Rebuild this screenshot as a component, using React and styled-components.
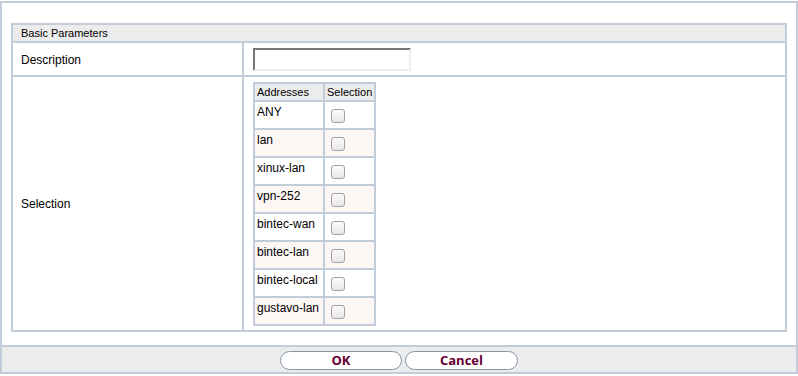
import React from 'react';
import styled, {createGlobalStyle} from 'styled-components';

const GlobalStyle=createGlobalStyle`
  html, body {
    margin: 0;
    padding: 0;
    background: #fff;
  }
  body {
    font-family: "Liberation Sans", Arial, sans-serif;
    font-size: 12px;
    color: #000;
  }
`;

const line="#c3cdd9";

const addresses=["ANY", "lan", "xinux-lan", "vpn-252", "bintec-wan", "bintec-lan", "bintec-local", "gustavo-lan"];

export default function App(){
  return(
    <>
      <GlobalStyle/>
      <Page>
        <Frame>
          <Body>
            <ParamTable>
              <SectionHead>Basic Parameters</SectionHead>
              <LabelCell $shift={2}>Description</LabelCell>
              <ValueCell>
                <TextInput type="text"/>
              </ValueCell>
              <LabelCell $shift={0}>Selection</LabelCell>
              <ValueCell $top>
                <AddrTable>
                  <AddrHead>Addresses</AddrHead>
                  <AddrHead>Selection</AddrHead>
                  {addresses.map((a, i)=>(
                    <React.Fragment key={a}>
                      <AddrCell $odd={i%2===1}>{a}</AddrCell>
                      <AddrCell $odd={i%2===1} $check>
                        <Check/>
                      </AddrCell>
                    </React.Fragment>
                  ))}
                </AddrTable>
              </ValueCell>
            </ParamTable>
          </Body>
          <Footer>
            <Button $w={122}>OK</Button>
            <Button $w={113}>Cancel</Button>
          </Footer>
        </Frame>
      </Page>
    </>
  );
}

const Page=styled.div`
  padding-top: 1px;
  width: 798px;
`;

const Frame=styled.div`
  width: 794px;
  border: 2px solid ${line};
  background: ${line};
  display: flex;
  flex-direction: column;
  gap: 2px;
`;

const Body=styled.div`
  background: #fff;
  padding: 20px 9px 13px 9px;
`;

const ParamTable=styled.div`
  display: grid;
  grid-template-columns: 229px 1fr;
  grid-template-rows: 16px 32px 253px;
  gap: 2px;
  border: 2px solid ${line};
  background: ${line};
`;

const SectionHead=styled.div`
  grid-column: 1 / -1;
  background: #ececec;
  font-size: 11px;
  line-height: 16px;
  padding-left: 8px;
`;

const LabelCell=styled.div`
  background: #fff;
  display: flex;
  align-items: center;
  padding: ${p=>p.$shift}px 0 0 8px;
`;

const ValueCell=styled.div`
  background: #fff;
  display: flex;
  align-items: ${p=>p.$top ? "flex-start" : "center"};
  padding: ${p=>p.$top ? "5px 0 0 9px" : "0 0 0 9px"};
`;

const TextInput=styled.input`
  box-sizing: border-box;
  width: 158px;
  height: 23px;
  margin: 0;
  border: 2px solid;
  border-color: #777 #eee #eee #777;
  background: #fff;
  padding: 0 3px;
  font-size: 12px;
  outline: none;
`;

const AddrTable=styled.div`
  display: grid;
  grid-template-columns: 68px 49px;
  grid-auto-rows: 26px;
  grid-template-rows: 16px;
  gap: 2px;
  border: 2px solid ${line};
  background: ${line};
`;

const AddrHead=styled.div`
  background: #ececec;
  font-size: 11px;
  line-height: 16px;
  padding-left: 2px;
`;

const AddrCell=styled.div`
  background: ${p=>p.$odd ? "#fcf7f5" : "#fff"};
  padding: ${p=>p.$check ? "7px 0 0 6px" : "3px 0 0 2px"};
  line-height: 14px;
`;

const Check=styled.span`
  display: block;
  box-sizing: border-box;
  width: 14px;
  height: 14px;
  border: 1px solid #a2a2a2;
  border-radius: 3px;
  background: linear-gradient(#fafafa, #e8e8e8);
`;

const Footer=styled.div`
  background: #ececec;
  height: 25px;
  display: flex;
  justify-content: center;
  align-items: center;
  gap: 3px;
`;

const Button=styled.button`
  box-sizing: border-box;
  width: ${p=>p.$w}px;
  height: 19px;
  margin: 1px 0 0 0;
  padding: 1px 0 0 0;
  border: 1px solid #8797a8;
  border-radius: 10px;
  background: #fff;
  color: #660033;
  font-family: "Open Sans", "DejaVu Sans", sans-serif;
  font-weight: bold;
  font-size: 13px;
  line-height: 15px;
`;
